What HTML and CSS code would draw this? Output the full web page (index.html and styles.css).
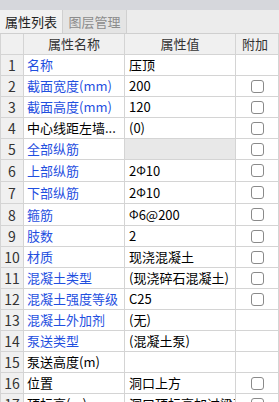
FILE: index.html
```html
<!DOCTYPE html>
<html lang="zh-CN">
<head>
  <meta charset="UTF-8" />
  <title>属性列表</title>
  <link rel="stylesheet" href="styles.css">
</head>
<body>
  <div class="panel">
    <div class="topbar"></div>
    <div class="tabs">
      <div class="tab active">属性列表</div>
      <div class="tab">图层管理</div>
    </div>

    <table class="props">
      <colgroup>
        <col class="c-num">
        <col class="c-name">
        <col class="c-val">
        <col class="c-add">
      </colgroup>
      <thead>
        <tr>
          <th></th>
          <th>属性名称</th>
          <th>属性值</th>
          <th>附加</th>
        </tr>
      </thead>
      <tbody>
        <tr><td class="num">1</td><td class="name blue">名称</td><td>压顶</td><td></td></tr>
        <tr><td class="num">2</td><td class="name blue">截面宽度(mm)</td><td>200</td><td><span class="check"></span></td></tr>
        <tr><td class="num">3</td><td class="name blue">截面高度(mm)</td><td>120</td><td><span class="check"></span></td></tr>
        <tr><td class="num">4</td><td class="name">中心线距左墙...</td><td>(0)</td><td><span class="check"></span></td></tr>
        <tr><td class="num">5</td><td class="name blue">全部纵筋</td><td class="gray"></td><td><span class="check"></span></td></tr>
        <tr><td class="num">6</td><td class="name blue">上部纵筋</td><td>2<span class="bar">Φ</span>10</td><td><span class="check"></span></td></tr>
        <tr><td class="num">7</td><td class="name blue">下部纵筋</td><td>2<span class="bar">Φ</span>10</td><td><span class="check"></span></td></tr>
        <tr><td class="num">8</td><td class="name blue">箍筋</td><td><span class="bar">Φ</span>6@200</td><td><span class="check"></span></td></tr>
        <tr><td class="num">9</td><td class="name blue">肢数</td><td>2</td><td><span class="check"></span></td></tr>
        <tr><td class="num">10</td><td class="name blue">材质</td><td>现浇混凝土</td><td><span class="check"></span></td></tr>
        <tr><td class="num">11</td><td class="name blue">混凝土类型</td><td>(现浇碎石混凝土)</td><td><span class="check"></span></td></tr>
        <tr><td class="num">12</td><td class="name blue">混凝土强度等级</td><td>C25</td><td><span class="check"></span></td></tr>
        <tr><td class="num">13</td><td class="name blue">混凝土外加剂</td><td>(无)</td><td></td></tr>
        <tr><td class="num">14</td><td class="name blue">泵送类型</td><td>(混凝土泵)</td><td></td></tr>
        <tr><td class="num">15</td><td class="name">泵送高度(m)</td><td></td><td></td></tr>
        <tr><td class="num">16</td><td class="name">位置</td><td>洞口上方</td><td><span class="check"></span></td></tr>
        <tr><td class="num">17</td><td class="name">顶标高(m)</td><td>洞口顶标高加过梁高度</td><td><span class="check"></span></td></tr>
      </tbody>
    </table>
  </div>
</body>
</html>
```

FILE: styles.css
```css
html, body {
  margin: 0;
  padding: 0;
  overflow: hidden;
  height: 402px;
}

body {
  font-family: "Noto Sans CJK SC", "DejaVu Sans", sans-serif;
  font-size: 13px;
  color: #000;
  background: #fff;
}

.panel {
  width: 279px;
}

.topbar {
  height: 10px;
  background: #d6d7dc;
}

.tabs {
  display: flex;
  height: 23px;
  background: #ececec;
  border-bottom: 1px solid #cfcfcf;
}

.tab {
  width: 64px;
  box-sizing: border-box;
  text-align: center;
  line-height: 23px;
  font-size: 13px;
  color: #8c8c8c;
  background: #e4e4e4;
  border-right: 1px solid #d0d0d0;
}

.tab.active {
  width: 63px;
  color: #222;
  background: #f1f1f1;
}

.props {
  border-collapse: collapse;
  table-layout: fixed;
  width: 278px;
}

.c-num { width: 23px; }
.c-name { width: 101px; }
.c-val { width: 111px; }
.c-add { width: 43px; }

.props th,
.props td {
  height: 21px;
  box-sizing: border-box;
  padding: 0 0 0 4px;
  border: 1px solid #d4d4d4;
  white-space: nowrap;
  overflow: hidden;
  line-height: 20px;
}

.props thead th {
  height: 20px;
  border-top: none;
}

.props th {
  font-weight: normal;
  background: #f0f0f0;
  color: #333;
  text-align: center;
  padding: 0;
}

.props th:last-child {
  text-align: left;
  padding-left: 6px;
}

.props td.num {
  background: #f0f0f0;
  text-align: center;
  padding: 0;
  font-size: 14px;
  color: #333;
}

.props td.name {
  padding-left: 3px;
}

.blue {
  color: #1f4fdf;
}

.props td.gray {
  background: #e8e8e8;
}

.bar {
  font-size: 12px;
  vertical-align: 1px;
}

.props td:last-child {
  text-align: center;
  padding: 0;
}

.check {
  display: inline-block;
  width: 11px;
  height: 11px;
  border: 1px solid #8a8a8a;
  border-radius: 3px;
  vertical-align: middle;
  margin-top: -2px;
}
```
